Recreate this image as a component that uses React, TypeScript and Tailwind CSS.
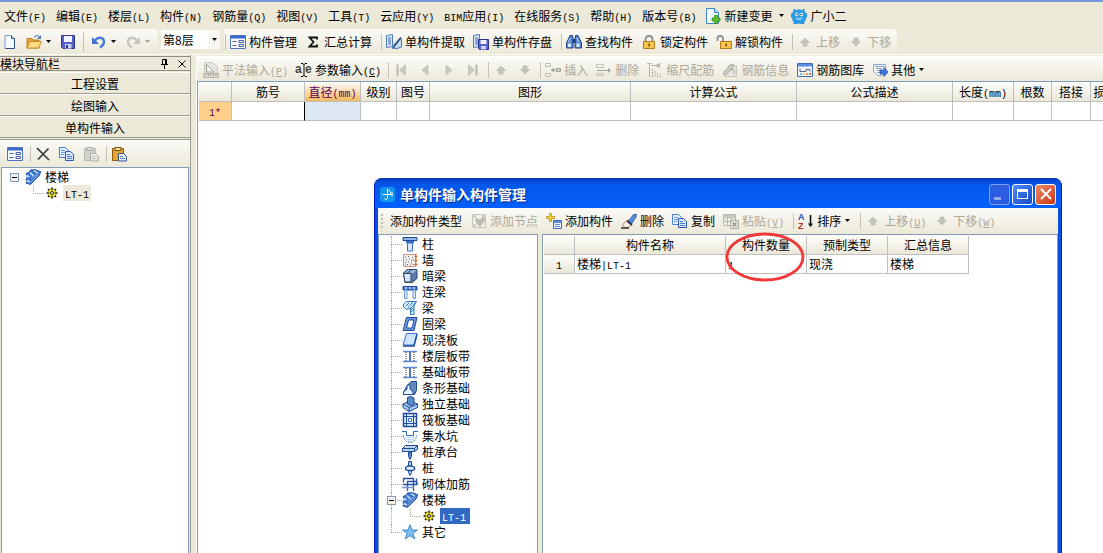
import React, { useState } from 'react';
import clsx from 'clsx';

const GREY = '#b9b7a8';
const NAVY = '#1d4b96';
const BLUE = '#3a6fd0';

// Latin runs use a half-width face so they sit on the same grid as the Chinese text
const Txt: React.FC<{ children: string; underline?: boolean }> = ({ children, underline }) => (
  <span className="whitespace-nowrap">
    {children.split(/([\x21-\x7e]+)/).map((part, i) => {
      if (i % 2 === 0) return part;
      const key = underline ? part.match(/^\((\w)\)$/) : null;
      return (
        <span key={i} className="font-['Liberation_Mono',monospace] text-[10px] leading-none">
          {key ? (
            <>
              (<u>{key[1]}</u>)
            </>
          ) : (
            part
          )}
        </span>
      );
    })}
  </span>
);

const Svg: React.FC<{ children: React.ReactNode; className?: string }> = ({ children, className }) => (
  <svg viewBox="0 0 16 16" className={clsx('w-4 h-4 shrink-0', className)} fill="none" aria-hidden="true">
    {children}
  </svg>
);

const Caret: React.FC<{ muted?: boolean }> = ({ muted }) => (
  <svg viewBox="0 0 7 4" className="w-[7px] h-1 shrink-0" aria-hidden="true">
    <path d="M1 0h5L3.5 3z" fill={muted ? '#a8a69a' : '#000'} />
  </svg>
);

/* ---------- toolbar icons ---------- */

const NewFile = () => (
  <Svg>
    <path d="M3 1.500h6.500l3 3v10H3z" fill="#f4f9ff" stroke="#7f9bc4" />
    <path d="M12.500 5v9.500H3.500" stroke="#30507f" />
    <path d="M9.500 1.500v3h3" fill="#c4d8f4" stroke="#30507f" />
  </Svg>
);

const OpenFolder = () => (
  <Svg>
    <path d="M1 14V4.500h5l1 1.500h6v8z" fill="#e7a93a" stroke="#b97f1c" />
    <path d="M1 14l3-6.500h11.500L12.500 14z" fill="#ffdb83" stroke="#c8902c" />
    <path d="M8 3.500C9.500 1 12 1 13.500 3" stroke="#6b8fc4" strokeWidth="1.300" />
    <path d="M15 1v4h-4z" fill="#4d78b8" />
  </Svg>
);

const Save = () => (
  <Svg>
    <path d="M1.500 1.500h13v13H3l-1.500-1.500z" fill="#5560c8" stroke="#2c348c" />
    <path d="M4 2h8v6H4z" fill="#f2f5ff" />
    <path d="M5 10h6.500v4.500H5z" fill="#cfd4ee" />
    <path d="M6 11h2v3H6z" fill="#2c348c" />
  </Svg>
);

const Undo: React.FC<{ muted?: boolean; flip?: boolean }> = ({ muted, flip }) => (
  <Svg className={flip ? '-scale-x-100' : ''}>
    <path d="M4 6.500C7 2.500 13 3 13 8c0 2.500-1.500 4-4 5.500" stroke={muted ? '#c8c7be' : '#4479d6'} strokeWidth="2.400" />
    <path d="M1 3v7h7z" fill={muted ? '#c8c7be' : '#3a6fcc'} />
  </Svg>
);

const Form = () => (
  <Svg>
    <path d="M.5 1.500h15v13H.5z" fill="#f5f8ff" stroke="#4b73c0" />
    <path d="M1 2h14v2.500H1z" fill="#3a68c8" />
    <path d="M2.500 7.500h4M2.500 11.500h4M9 6.500h4.500v2H9zM9 10.500h4.500v2H9z" stroke="#4763a0" />
  </Svg>
);

const Sigma = () => (
  <Svg>
    <path d="M12 5.500V3.500H4.500L8.500 8l-4 4.500H12v-2" stroke="#111" strokeWidth="1.800" />
  </Svg>
);

const Server = () => (
  <>
    <path d="M.5 1.500l6-1v12l-6 1z" fill="#dceafb" stroke="#4f78b8" />
    <path d="M2 4h3M2 6h3M2 8h3M2 10h3" stroke="#3b69b4" />
  </>
);

const Extract = () => (
  <Svg>
    <Server />
    <path d="M7 14l1.500-4 6-6 1 1v8L11 14.500z" fill="#c9dff7" stroke="#3f72b4" />
    <path d="M6.500 14.500l8.500-11" stroke="#234f8c" strokeWidth="1.500" />
  </Svg>
);

const StoreDisk = () => (
  <Svg>
    <Server />
    <path d="M5.500 5.500h10v10h-9l-1-1z" fill="#5560c8" stroke="#2c348c" />
    <path d="M7.500 6h6v4h-6z" fill="#f2f5ff" />
    <path d="M8 12h5v3.500H8z" fill="#cfd4ee" />
  </Svg>
);

const Binoculars = () => (
  <Svg>
    <path d="M4 1.500h2.500l.5 3V14H.5V9zM9.500 1.500H12L15.500 9v5H9V4.500z" fill="#5f8ad0" stroke="#1f3f80" />
    <path d="M6.500 5h3v4h-3z" fill="#1f3f80" />
    <path d="M2 9.500h3V13H2zM10.500 9.500h3V13h-3z" fill="#dce9fb" />
    <path d="M4 4l-1.500 4M11 4l1.500 4" stroke="#b9d0f2" />
  </Svg>
);

const Padlock: React.FC<{ open?: boolean }> = ({ open }) => (
  <Svg>
    <path d={open ? 'M1.500 7V4.500C1.500 1 7 1 7 4.500V7' : 'M4.500 8V5c0-4 7-4 7 0v3'} stroke="#8c8c8c" strokeWidth="1.800" />
    <path d={open ? 'M4.500 7.500h11v7h-11z' : 'M2.500 7.500h11v7h-11z'} fill="#f9c54c" stroke="#b07a1a" />
    <path d={open ? 'M9.500 9.500h1.500v3H9.500z' : 'M7.300 9.500h1.500v3H7.300z'} fill="#6b4a10" />
  </Svg>
);

const Arrow: React.FC<{ down?: boolean }> = ({ down }) => (
  <Svg className={down ? 'rotate-180' : ''}>
    <path d="M8 4l4.500 4.500H10V12H6V8.500H3.500z" fill="#c5c4bc" stroke="#b3b2aa" strokeWidth=".6" />
  </Svg>
);

const Nav: React.FC<{ back?: boolean; end?: boolean }> = ({ back, end }) => (
  <Svg className={back ? '-scale-x-100' : ''}>
    <path d={end ? 'M3.500 2.500v11l6-5.500z' : 'M5 3v10l6-5z'} fill="#c9c8c0" stroke="#b5b4ac" strokeWidth=".5" />
    {end && <path d="M11.500 2.500v11" stroke="#b9b8b0" strokeWidth="2" />}
  </Svg>
);

const Ruler = () => (
  <Svg>
    <path d="M1.500.5h8l5 4v7h-13z" fill="#e5e4de" stroke="#cac9c0" />
    <path d="M3.500 2.500v7.500h7.500z" fill="#f6f5f0" stroke="#a3a299" />
    <path d="M.5 11.500h15v4H.5z" fill="#dcdbd3" stroke="#b3b2a9" />
    <path d="M3 12v2M5.500 12v2M8 12v2M10.500 12v2M13 12v2" stroke="#9d9c94" />
  </Svg>
);

const TextCursor = () => (
  <Svg className="overflow-visible">
    <text x="-1" y="11" fontSize="12" fontWeight="bold" fill="#444" fontFamily="Liberation Sans, sans-serif">a</text>
    <text x="9" y="11" fontSize="12" fontWeight="bold" fill="#444" fontFamily="Liberation Sans, sans-serif">e</text>
    <path d="M5 1.500h2l1 1 1-1h2M8 2v12M5 14.500h2l1-1 1 1h2" stroke="#000" />
  </Svg>
);

const InsertRow: React.FC<{ remove?: boolean }> = ({ remove }) => (
  <Svg>
    <path d={remove ? 'M.5 2.500h7v3h-7zM.5 11.500h7v2h-7z' : 'M.5 1.500h5v3h-5zM.5 11.500h5v3h-5z'} stroke="#c0bfb6" />
    <path d={remove ? 'M1 8.500h13' : 'M6 8h5'} stroke="#a3a299" />
    <path d={remove ? 'M12 6l3 2.500-3 2.500z' : 'M9 5.500L6 8l3 2.500z'} fill="#a3a299" />
    {!remove && <path d="M11.500 6.500h4v3h-4z" fill="#d4d3cb" stroke="#a3a299" />}
  </Svg>
);

const ScaleBar = () => (
  <Svg>
    <path d="M2.500 1v14M4 3.500h9" stroke={GREY} />
    <path d="M12.500 1v5M5.500 7v8M8 9v6M10.500 11v4M13 13v2" stroke="#aaa99f" strokeDasharray="2 1" />
    <path d="M0 1.500h5M10 2l3 1.500L10 5z" stroke={GREY} />
  </Svg>
);

const RebarInfo = () => (
  <Svg>
    <path d="M6.500 3.500h8v11h-12V9" fill="#e6e5df" stroke="#c5c4bb" />
    <path d="M1 12l7-9 3-1 1 2-8 9z" fill="#cccbc3" stroke="#b0afa6" />
    <path d="M8 8c3-2 5 0 4 4" stroke="#a3a299" />
  </Svg>
);

const Gallery = () => (
  <Svg>
    <path d="M.5 1.500h15v13H.5z" fill="#f0f4fb" stroke="#3f6cb4" />
    <path d="M1 2h14v2.500H1z" fill="#5b8ee0" />
    <path d="M3 6.500v3h6v-2h4v2" stroke="#596880" />
    <path d="M3 12h2" stroke="#48a0e0" strokeWidth="1.500" />
    <path d="M6 12h2" stroke="#f0c040" strokeWidth="1.500" />
    <path d="M9 12h2" stroke="#e08030" strokeWidth="1.500" />
    <path d="M12 12h2" stroke="#e04830" strokeWidth="1.500" />
  </Svg>
);

const MoreOps = () => (
  <Svg>
    <path d="M1.500 2.500h12v8l-3 3h-5l-4-4z" fill="#f2f6fc" stroke="#8aa6d0" />
    <path d="M3 4.500h9M4 6.500h6M5 8.500h3M5 10.500h3" stroke="#8f9fbc" />
    <path d="M8 8h4V5.500L16 10l-4 4.500V12H8z" fill="#3f78dc" stroke="#1d4b96" strokeWidth=".7" />
  </Svg>
);

const FileAdd = () => (
  <Svg>
    <path d="M1.500.5h8l4 4v11h-12z" fill="#eef7ff" stroke="#3c86cc" />
    <path d="M9.500.5v4h4" fill="#b9dcf8" stroke="#3c86cc" />
    <path d="M9.500 7.500h3V10H15v3h-2.500v2.500h-3V13H7v-3h2.500z" fill="#5cc02c" stroke="#2f8010" strokeWidth=".7" />
  </Svg>
);

const Mascot = () => (
  <Svg>
    <path d="M3 1l2 1.500c2-1 4-1 6 0L13 1l.8 3.500L16 6v3l-1.500 1c0 2-.5 3-1.500 4v2h-3l-2-1-2 1H3v-2c-1-1-1.500-2-1.500-4L0 9V6l2.200-1.500z" fill="#2a9fe8" stroke="#1777c0" strokeWidth=".5" />
    <circle cx="5.700" cy="6.500" r="1.700" fill="#fff" />
    <circle cx="10.300" cy="6.500" r="1.700" fill="#fff" />
    <circle cx="6" cy="6.500" r=".8" fill="#123" />
    <circle cx="10" cy="6.500" r=".8" fill="#123" />
    <path d="M5 10c2 1.500 4 1.500 6 0" stroke="#fff" />
  </Svg>
);

const Cross = () => (
  <Svg>
    <path d="M2 2l12 12M13.500 2.500L3 13.500" stroke="#3a3a3a" strokeWidth="1.700" />
  </Svg>
);

const Copy = () => (
  <Svg>
    <path d="M.5 1.500h6l3 3v7h-9z" fill="#e4efff" stroke="#4a80d0" />
    <path d="M2 4.500h4M2 6.500h4M2 8.500h3" stroke="#6c9be0" />
    <path d="M6.500 5.500h5l3 3v6h-8z" fill="#d6e6ff" stroke="#2c5cb0" />
    <path d="M8 8.500h3M8 10.500h5M8 12.500h5" stroke="#5080d0" />
  </Svg>
);

const Paste: React.FC<{ muted?: boolean }> = ({ muted }) => (
  <Svg>
    <path d="M1.500 2.500h11v12h-11z" fill={muted ? '#d2d1ca' : '#e8a52c'} stroke={muted ? '#bbbab2' : '#8c5a10'} />
    <path d="M4 1.500h6v3H4z" fill={muted ? '#dddcd6' : '#f7e08c'} stroke={muted ? '#aeada5' : '#6a5020'} />
    <path d="M7.500 7.500h5l3 3v4.500h-8z" fill={muted ? '#eceae4' : '#e4efff'} stroke={muted ? '#aeada5' : '#33508c'} />
    <path d="M9 10.500h3M9 12.500h5" stroke={muted ? '#bbbab2' : '#6080b8'} />
  </Svg>
);

const NodeAdd = () => (
  <Svg>
    <path d="M1.500 1.500h13v13h-13z" fill="#f3f2ec" stroke="#c3c2b9" />
    <path d="M1 1h4v4H1zM11 1h4v4h-4zM1 11h4v4H1z" fill="#cfcec5" />
    <path d="M4 6l1 4 4 4 6-7-1.500-2.500L11 4 9 6.500 6.500 5z" fill="#bdbcb3" />
  </Svg>
);

const PartAdd = () => (
  <Svg>
    <path d="M3.500.5h2v3h3v2h-3v3h-2v-3h-3v-2h3z" fill="#ffd94a" stroke="#b48a14" strokeWidth=".8" />
    <path d="M7.500 7.500h8v8h-8z" fill="#e8f0ff" stroke="#3f6cb4" />
    <path d="M8 8h7v2H8z" fill="#5b8ee0" />
    <path d="M9 11.500h5M9 13.500h5" stroke="#6f8fc8" />
  </Svg>
);

const Eraser = () => (
  <Svg>
    <path d="M7 8.500L12.500 1.500h3L15 4l-4.500 7z" fill="#5a8ce0" stroke="#234f9c" strokeWidth=".8" />
    <path d="M1.500 11.500l4-3.500 4.500 4-2.500 2.500H3.500z" fill="#faf0e8" stroke="#a8806c" />
    <path d="M0 15h8" stroke="#333" strokeWidth="1.300" />
    <path d="M6 7.500l5 4.500" stroke="#26304c" strokeWidth="1.700" />
  </Svg>
);

const PasteGrid = () => (
  <Svg>
    <path d="M.5 1.500h12v11H.5zM.5 5h12M.5 8.500h12M4.500 2v10M8.500 2v10" stroke="#b9b8b0" />
    <path d="M1 2h11v2.500H1z" fill="#c9c8c0" />
    <path d="M7.500 7.500h8v8h-8z" fill="#e6e5df" stroke="#aeada5" />
    <path d="M9.500 9.500l4 4M13.500 9.500l-4 4" stroke="#96958d" strokeWidth="1.300" />
  </Svg>
);

const SortAZ = () => (
  <Svg>
    <text x="0" y="7" fontSize="9" fontWeight="bold" fill="#2c50b0" fontFamily="Liberation Sans, sans-serif">A</text>
    <text x="0" y="15.500" fontSize="9" fontWeight="bold" fill="#b03030" fontFamily="Liberation Sans, sans-serif">Z</text>
    <path d="M12.500 2v11" stroke="#000" strokeWidth="1.500" />
    <path d="M10 10.500h5l-2.500 3.500z" fill="#000" />
  </Svg>
);

/* ---------- tree icons ---------- */

const Stair = () => (
  <Svg>
    <path d="M1 4.500l3.500-1.500L5.500.8h3L10 .5l6 2.200-2 4.300-8.500 8.500L.8 14l1.500-2L.8 11l1.500-3z" fill="#3d74cc" stroke={NAVY} strokeWidth=".8" />
    <path d="M1.500 6.500l3 1.500M5 3.500l3.500 3.500M9 1.500l3.500 2.500M2 11.500l3 1.500" stroke="#d3e4fb" strokeWidth="1.400" />
    <path d="M6 9.500l7.500-5.500M6 13l7-7" stroke="#85aeea" />
  </Svg>
);

const Gear = () => (
  <svg viewBox="0 0 12 12" className="w-3 h-3 shrink-0" aria-hidden="true">
    <path d="M6 .5v11M.5 6h11M2 2l8 8M10 2l-8 8" stroke="#222" strokeWidth="1.600" />
    <circle cx="6" cy="6" r="4.200" fill="#f6ec1c" stroke="#4c4800" strokeWidth=".6" />
    <circle cx="6" cy="6" r="1.500" fill="#fff" stroke="#222" />
    <path d="M6 2v1.500M6 8.500V10M2 6h1.500M8.500 6H10" stroke="#222" />
  </svg>
);

const treeIcons: Record<string, React.ReactNode> = {
  柱: (
    <>
      <path d="M1 1.500h14v3H1z" fill="#8fb4ee" stroke={NAVY} />
      <path d="M4 5h8v2H4z" fill={BLUE} />
      <path d="M5.500 7h5v8h-5z" fill="#d8e7fc" stroke={BLUE} />
    </>
  ),
  墙: (
    <>
      <path d="M1.500 2.500h12v12h-12z" fill="#efeeec" stroke="#d09878" />
      <path d="M3 5h1M6 4.500h1M10 5.500h1M4 8h1M7 7h1M9 8.500h1M3 10.500h1M6 10h1M5 12.500h1M9 11h1M11 12.500h1M8 13h1M3 13h1M11 8h1" stroke="#666" />
      <path d="M14 1.500v13M12.500 4.500h3M12.500 8.500h3M12.500 12.500h3" stroke="#d4682c" />
    </>
  ),
  暗梁: (
    <>
      <path d="M1.500 5L5 1.500h10v9L10 14.500H3z" fill="#5e7dac" stroke="#2a4470" />
      <path d="M1.500 5.500H9V14H3z" fill="#d9e6f6" stroke="#2a4470" />
      <path d="M3.500 4.500L7 2M8 4.500L12 2M9.500 5l5-3" stroke="#c4d5ee" />
    </>
  ),
  连梁: (
    <>
      <path d="M1 2.500h14v3.500H1z" fill="#4a7cd6" stroke={NAVY} />
      <path d="M2.500 6h2.500v8.500H2.500zM11 6h2.500v8.500H11z" fill="#dce9fc" stroke="#6f96d8" />
      <path d="M3 4h2M7 4h2M11 4h2" stroke="#fff" />
    </>
  ),
  梁: (
    <>
      <path d="M1.500 4l3-2.500h10L12 6v8.500H8.500V8L5 9.500 1.500 7z" fill="#dcefff" stroke="#2a78c0" />
      <path d="M4 6l3-3M6 7.500L11 2M9 8l4-5M9 12l3-3M9 10l3-3" stroke="#2a78c0" />
    </>
  ),
  圈梁: (
    <>
      <path d="M4.500 1.500h10.500l-3 13H1z" fill="#6f97dc" stroke={NAVY} />
      <path d="M6.500 4H12l-2 8H4.500z" fill="#fff" stroke={NAVY} />
    </>
  ),
  现浇板: (
    <>
      <path d="M4.500 1.500H15l-3 11.500H1z" fill="#cfe3fb" stroke={BLUE} />
      <path d="M1 14h11l3-11.500" stroke={NAVY} strokeWidth="1.500" />
    </>
  ),
  楼层板带: (
    <>
      <path d="M1 3.500h14M1 13.500h14" stroke="#5b8ad8" strokeWidth="1.500" />
      <path d="M8 4v9" stroke={NAVY} strokeWidth="1.500" />
      <path d="M4 4v9M12 4v9" stroke="#333" strokeDasharray="1 1" />
    </>
  ),
  条形基础: (
    <>
      <path d="M5 6l4-4.500h5.500v9l-2 4H1.500V12z" fill="#6289b8" stroke={NAVY} />
      <path d="M1.500 14.500V12L5 9V5h3v4l3 3v2.500z" fill="#eaf3ff" stroke={NAVY} />
    </>
  ),
  独立基础: (
    <>
      <path d="M1 8l7-3.500L15.500 8v3.500L7 15.500l-6-4z" fill="#a9c9f0" stroke={NAVY} />
      <path d="M1 8l6 3.500L15.500 8M7 11.500v4" stroke={NAVY} />
      <path d="M5.500 1.500L9 .5l3 1.500v6L8.500 9.500l-3-1.500z" fill="#5c8cc8" stroke={NAVY} />
    </>
  ),
  筏板基础: (
    <>
      <path d="M1.500 1.500h13v13h-13z" fill="#dbe9fb" stroke={NAVY} strokeWidth="1.500" />
      <path d="M4.500 1v14M11.500 1v14M1 4.500h14M1 11.500h14" stroke={NAVY} />
      <path d="M6.500 6.500h3v3h-3z" fill="#fff" stroke={BLUE} />
    </>
  ),
  集水坑: (
    <>
      <path d="M0 3.500h4.500v4h7v-4H16" stroke="#2f6cb8" />
      <path d="M1 7c1 5.500 4 7.500 7 7.500s6-2 7-7.500" stroke="#4f88d0" strokeDasharray="2 1" />
      <path d="M3.500 9.500h9M4.500 11.500h7M6 13h4" stroke="#78a7e4" strokeDasharray="1 1" />
    </>
  ),
  桩承台: (
    <>
      <path d="M.5 4.500l3-3h12v4l-3 2H.5z" fill="#b9d3f4" stroke={NAVY} />
      <path d="M.5 4.500h12v3M12.500 4.500l3-3" stroke={NAVY} />
      <path d="M6.500 8h3v4.500L8 15.500l-1.500-3z" fill="#5c8cc8" stroke={NAVY} />
    </>
  ),
  桩: (
    <>
      <path d="M6.500 1.500h3v5h-3zM6.500 9h3v3.500L8 15.500l-1.500-3z" fill="#a9c9f0" stroke={NAVY} />
      <path d="M3.500 7.500L6 6h4l2.500 1.500v2l-2.500 1H6l-2.500-1z" fill="#e4f0ff" stroke={NAVY} strokeWidth="1.300" />
    </>
  ),
  砌体加筋: (
    <>
      <path d="M1.500 6.500V2.500h10v6h3v-6M1 8.500h14v-3M5.500 15V5.500h9M11.500 9v6" stroke="#2a52a0" strokeWidth="1.300" />
      <path d="M0 11.500h12" stroke="#6f97dc" strokeWidth="1.500" />
    </>
  ),
  其它: <path d="M8 .8l2 5.200h5.500L11 9.300l1.800 5.700L8 11.700 3.200 15 5 9.300.5 6H6z" fill="#7cc0f2" stroke="#2c74c0" strokeWidth=".8" />,
};
treeIcons['基础板带'] = treeIcons['楼层板带'];

const treeNames = [
  '柱', '墙', '暗梁', '连梁', '梁', '圈梁', '现浇板', '楼层板带', '基础板带',
  '条形基础', '独立基础', '筏板基础', '集水坑', '桩承台', '桩', '砌体加筋',
];

/* ---------- shared pieces ---------- */

interface ToolProps {
  icon?: React.ReactNode;
  label?: string;
  title?: string;
  disabled?: boolean;
  caret?: boolean;
}

const Tool: React.FC<ToolProps> = ({ icon, label, title, disabled, caret }) => (
  <button
    type="button"
    disabled={disabled}
    aria-label={label ?? title}
    className="flex shrink-0 items-center gap-[3px] h-full px-1 text-black disabled:text-[#aca899]"
  >
    {icon}
    {label && <Txt underline>{label}</Txt>}
    {caret && <Caret muted={disabled} />}
  </button>
);

const Sep: React.FC<{ tight?: boolean }> = ({ tight }) => (
  <span className={clsx('w-px h-4 shrink-0 bg-[#c5c2b4]', tight ? 'ml-[3px]' : 'ml-[5px]')} />
);

const bar = 'flex items-center bg-linear-to-b from-[#fbfaf7] to-[#ece9d8]';
const headCell = 'bg-linear-to-b from-[#fdfdfb] to-[#ebe8d9] border-r border-b border-[#bfbfbf] p-0 text-center font-normal';
const cell = 'border-r border-b border-[#bfbfbf] p-0';

const Expander = () => (
  <button type="button" aria-label="折叠" className="flex items-center justify-center w-[9px] h-[9px] shrink-0 border border-[#7f9db9] bg-[#f4f2ea]">
    <span className="w-[5px] h-px bg-black" />
  </button>
);

const menus = [
  '文件(F)', '编辑(E)', '楼层(L)', '构件(N)', '钢筋量(Q)', '视图(V)', '工具(T)',
  '云应用(Y)', 'BIM应用(I)', '在线服务(S)', '帮助(H)', '版本号(B)',
];

const gridCols = [
  { name: '筋号', col: 'w-[73px]' },
  { name: '直径(mm)', col: 'w-[56px]' },
  { name: '级别', col: 'w-[36px]' },
  { name: '图号', col: 'w-[33px]' },
  { name: '图形', col: 'w-[201px]' },
  { name: '计算公式', col: 'w-[166px]' },
  { name: '公式描述', col: 'w-[156px]' },
  { name: '长度(mm)', col: 'w-[61px]' },
  { name: '根数', col: 'w-[38px]' },
  { name: '搭接', col: 'w-[39px]' },
  { name: '损耗', col: 'w-[30px]' },
];

/* ---------- panels ---------- */

const MenuBar = () => (
  <nav className="flex items-center h-[27px] shrink-0 pl-1">
    <div className="flex gap-[10px]">
      {menus.map(m => (
        <button key={m} type="button"><Txt>{m}</Txt></button>
      ))}
    </div>
    <button type="button" className="flex items-center gap-[3px] ml-[9px]">
      <FileAdd />
      <Txt>新建变更</Txt>
      <span className="ml-[3px]"><Caret /></span>
    </button>
    <button type="button" className="flex items-center gap-[3px] ml-[6px]">
      <Mascot />
      <Txt>广小二</Txt>
    </button>
  </nav>
);

const MainToolbar = () => {
  const [floor, setFloor] = useState('第8层');
  return (
    <div className="flex items-center h-[25px] shrink-0">
      <div className={clsx(bar, 'h-full w-[158px] rounded-r-sm')}>
        <div className="flex items-center h-full -ml-1 pl-[2px]">
          <Tool icon={<NewFile />} title="新建" />
          <Tool icon={<OpenFolder />} title="打开" caret />
          <Tool icon={<Save />} title="保存" />
          <span className="w-px h-5 ml-[3px] mr-[3px] bg-[#c5c2b4]" />
          <Tool icon={<Undo />} title="撤销" caret />
          <Tool icon={<Undo muted flip />} title="重做" caret disabled />
        </div>
      </div>
      <div className="relative ml-[3px] mb-1">
        <select
          aria-label="楼层"
          value={floor}
          onChange={e => setFloor(e.target.value)}
          className="block appearance-none w-[59px] h-[19px] pl-[2px] bg-white text-xs leading-4 outline-none"
        >
          <option>第8层</option>
          <option>第7层</option>
        </select>
        <span className="absolute right-0 inset-y-0 flex items-center justify-center w-3 bg-[#f8f7f1] pointer-events-none">
          <Caret />
        </span>
      </div>
      <div className={clsx(bar, 'h-full ml-1 pl-px pr-[2px] rounded-r-sm')}>
        <span className="w-px h-4 bg-[#c5c2b4]" />
        <Tool icon={<Form />} label="构件管理" />
        <Tool icon={<Sigma />} label="汇总计算" />
        <Sep />
        <Tool icon={<Extract />} label="单构件提取" />
        <Tool icon={<StoreDisk />} label="单构件存盘" />
        <Sep />
        <Tool icon={<Binoculars />} label="查找构件" />
        <Tool icon={<Padlock />} label="锁定构件" />
        <Tool icon={<Padlock open />} label="解锁构件" />
        <Sep />
        <Tool icon={<Arrow />} label="上移" disabled />
        <Tool icon={<Arrow down />} label="下移" disabled />
      </div>
    </div>
  );
};

const NavPanel = () => (
  <aside className="flex flex-col w-[191px] shrink-0 border-r border-[#9d9c92]">
    <header className="flex items-center h-[15px] mt-px border-y border-[#8f8e86] pr-1">
      <span className="flex-1"><Txt>模块导航栏</Txt></span>
      <button type="button" aria-label="固定">
        <svg viewBox="0 0 9 10" className="w-[9px] h-[10px] mr-[9px]" fill="none">
          <path d="M2.500 5V.5h4V5M5.500 1v4M1 5.500h7M4.500 6v4" stroke="#000" />
        </svg>
      </button>
      <button type="button" aria-label="关闭">
        <svg viewBox="0 0 8 8" className="w-2 h-2" fill="none">
          <path d="M.5.5l7 7M7.500.5l-7 7" stroke="#000" />
        </svg>
      </button>
    </header>
    <div className="flex flex-col mt-px">
      {['工程设置', '绘图输入', '单构件输入'].map(t => (
        <button key={t} type="button" className="h-[22px] pt-px border-t border-t-white border-b border-b-[#9d9c92]">
          <Txt>{t}</Txt>
        </button>
      ))}
    </div>
    <div className={clsx(bar, 'h-7 mt-px border-t border-[#9d9c92] pl-[3px]')}>
      <Tool icon={<Form />} title="构件" />
      <Sep tight />
      <Tool icon={<Cross />} title="删除" />
      <Tool icon={<Copy />} title="复制" />
      <Tool icon={<Paste muted />} title="粘贴" disabled />
      <Sep tight />
      <Tool icon={<Paste />} title="粘贴到" />
    </div>
    <ul className="flex-1 mx-px pt-px border border-b-0 border-[#7f9db9] bg-white">
      <li>
        <div className="flex items-center h-4 pl-2">
          <Expander />
          <span className="flex items-center gap-1 pl-[6px]"><Stair /><Txt>楼梯</Txt></span>
        </div>
        <div className="flex items-center h-4 pl-[31px]">
          <span className="w-[11px] h-[9px] mb-2 border-l border-b border-dotted border-[#aca899]" />
          <span className="ml-[2px] mr-[5px] flex"><Gear /></span>
          <button type="button" className="h-4 px-[2px] bg-[#ece9d8] leading-4"><Txt>LT-1</Txt></button>
        </div>
      </li>
    </ul>
  </aside>
);

const RebarPanel = () => (
  <main className="flex flex-col flex-1 min-w-0 ml-[5px] border-l border-white">
    <div className={clsx(bar, 'h-[25px] mt-px border-t-2 border-white pl-[2px] overflow-hidden')}>
      <Tool icon={<Ruler />} label="平法输入(P)" disabled />
      <Tool icon={<TextCursor />} label="参数输入(C)" />
      <Sep tight />
      <Tool icon={<Nav back end />} title="第一条" disabled />
      <Tool icon={<Nav back />} title="上一条" disabled />
      <Tool icon={<Nav />} title="下一条" disabled />
      <Tool icon={<Nav end />} title="最后一条" disabled />
      <Sep tight />
      <Tool icon={<Arrow />} title="上移" disabled />
      <Tool icon={<Arrow down />} title="下移" disabled />
      <Sep tight />
      <Tool icon={<InsertRow />} label="插入" disabled />
      <Tool icon={<InsertRow remove />} label="删除" disabled />
      <Tool icon={<ScaleBar />} label="缩尺配筋" disabled />
      <Tool icon={<RebarInfo />} label="钢筋信息" disabled />
      <Tool icon={<Gallery />} label="钢筋图库" />
      <Tool icon={<MoreOps />} label="其他" caret />
    </div>
    <div className="flex-1 border-t border-l border-[#7f9db9] bg-white overflow-hidden pl-px">
      <table className="table-fixed w-0 border-separate border-spacing-0">
        <colgroup>
          <col className="w-[33px]" />
          {gridCols.map(c => <col key={c.name} className={c.col} />)}
        </colgroup>
        <thead>
          <tr className="h-5">
            <th className={headCell} />
            {gridCols.map((c, i) => (
              <th
                key={c.name}
                className={clsx(headCell, i === 1 && 'from-[#fbd08c] to-[#f3b95c] text-[#5c0050]')}
              >
                <Txt>{c.name}</Txt>
              </th>
            ))}
          </tr>
        </thead>
        <tbody>
          <tr className="h-[19px]">
            <td className={clsx(cell, 'bg-[#ffd08a] text-center text-[#5c0050]')}><Txt>1*</Txt></td>
            {gridCols.map((c, i) => (
              <td key={c.name} className={clsx(cell, i === 0 && 'border-r-black', i === 1 && 'bg-[#dfe9f5]')} />
            ))}
          </tr>
        </tbody>
      </table>
    </div>
  </main>
);

const TreeRow: React.FC<{ name: string; last?: boolean; open?: boolean; icon: React.ReactNode }> = ({ name, last, open, icon }) => (
  <div className="flex items-center h-4 pl-2">
    <span className="relative flex items-center w-[9px] h-4 mr-[6px]">
      <span className={clsx('absolute left-1 top-0 border-l border-dotted border-[#aca899]', last ? 'h-2' : 'h-4')} />
      <span className="absolute left-1 top-2 w-[11px] border-t border-dotted border-[#aca899]" />
      {open && <span className="relative flex"><Expander /></span>}
    </span>
    <span className="flex items-center gap-1">
      {icon}
      <Txt>{name}</Txt>
    </span>
  </div>
);

const ComponentTree = () => (
  <ul className="w-[160px] shrink-0 pt-px border border-b-0 border-[#7f9db9] bg-white">
    {treeNames.map(n => (
      <li key={n}><TreeRow name={n} icon={<Svg>{treeIcons[n]}</Svg>} /></li>
    ))}
    <li>
      <TreeRow name="楼梯" open icon={<Stair />} />
      <div className="flex items-center h-4 pl-3">
        <span className="w-px h-4 border-l border-dotted border-[#aca899]" />
        <span className="w-[11px] h-[9px] mb-2 ml-[18px] border-l border-b border-dotted border-[#aca899]" />
        <span className="ml-[2px] mr-[5px] flex"><Gear /></span>
        <button type="button" className="h-4 pl-[2px] pr-1 bg-[#316ac5] text-white leading-4"><Txt>LT-1</Txt></button>
      </div>
    </li>
    <li><TreeRow name="其它" last icon={<Svg>{treeIcons['其它']}</Svg>} /></li>
  </ul>
);

const ComponentTable = () => (
  <div className="flex-1 border border-b-0 border-[#7f9db9] bg-white p-px">
    <table className="table-fixed w-0 border-separate border-spacing-0">
      <colgroup>
        <col className="w-[31px]" />
        <col className="w-[151px]" />
        <col className="w-[81px]" />
        <col className="w-[81px]" />
        <col className="w-[81px]" />
      </colgroup>
      <thead>
        <tr className="h-[19px]">
          <th className={headCell} />
          <th className={headCell}><Txt>构件名称</Txt></th>
          <th className={clsx(headCell, 'relative')}>
            <Txt>构件数量</Txt>
            {/* red ring round the quantity column */}
            <svg viewBox="0 0 82 50" className="absolute -left-[2px] -top-1 w-[82px] h-[50px] z-10 pointer-events-none" fill="none">
              <ellipse cx="41" cy="25" rx="38" ry="23" stroke="#f03a3a" strokeWidth="2.800" />
            </svg>
          </th>
          <th className={headCell}><Txt>预制类型</Txt></th>
          <th className={headCell}><Txt>汇总信息</Txt></th>
        </tr>
      </thead>
      <tbody>
        <tr className="h-[19px]">
          <td className={headCell}><Txt>1</Txt></td>
          <td className={clsx(cell, 'pl-[2px]')}><Txt>楼梯|LT-1</Txt></td>
          <td className={clsx(cell, 'pl-[2px]')}><Txt>1</Txt></td>
          <td className={clsx(cell, 'pl-[2px]')}><Txt>现浇</Txt></td>
          <td className={clsx(cell, 'pl-[2px]')}><Txt>楼梯</Txt></td>
        </tr>
      </tbody>
    </table>
  </div>
);

const winBtn = 'flex items-center justify-center w-[21px] h-[21px] rounded-[3px] border';

const ManagerDialog = () => (
  <section
    role="dialog"
    aria-label="单构件输入构件管理"
    className="absolute left-[374px] right-[41px] top-[176px] bottom-0 flex flex-col rounded-t-lg overflow-hidden border-x border-[#0018c0] bg-[#0a50e0] px-[3px]"
  >
    <header className="flex items-center h-[30px] shrink-0 -mx-[3px] px-[5px] pt-[2px] bg-linear-to-b from-[#0838b8] via-[#0358ea] via-20% to-[#0460fb]">
      <svg viewBox="0 0 15 15" className="w-[15px] h-[15px] shrink-0" fill="none">
        <rect width="15" height="15" rx="3" fill="#1296ec" />
        <path d="M7.500 2v9c0 2-3 2-3 0M2.500 7.500h10M7.500 3c3 0 3 2 3 4M12 5v4.500" stroke="#fff" />
      </svg>
      <h2 className="flex-1 ml-[5px] text-sm leading-5 font-bold text-white [text-shadow:1px_1px_#0a1e78]">单构件输入构件管理</h2>
      <div className="flex gap-[2px]">
        <button type="button" aria-label="最小化" disabled className={clsx(winBtn, 'border-[#7f9ff0] bg-[#2c5ce0]')}>
          <span className="w-[7px] h-[3px] mt-[9px] mr-1 bg-[#8fa9ee]" />
        </button>
        <button type="button" aria-label="最大化" className={clsx(winBtn, 'border-white bg-linear-to-br from-[#4f8af8] to-[#1848c8]')}>
          <span className="w-[11px] h-[10px] border border-t-[3px] border-white" />
        </button>
        <button type="button" aria-label="关闭" className={clsx(winBtn, 'border-white bg-linear-to-br from-[#f08a66] to-[#c8320c]')}>
          <svg viewBox="0 0 12 12" className="w-3 h-3"><path d="M1 1l10 10M11 1L1 11" stroke="#fff" strokeWidth="2" /></svg>
        </button>
      </div>
    </header>
    <div className="flex flex-col flex-1 bg-[#ece9d8]">
      <div className={clsx(bar, 'h-[26px] shrink-0 overflow-hidden pl-[3px]')}>
        <span className="h-[14px] mr-[3px] border-l-2 border-dotted border-[#c1beae]" />
        <span className="mr-px h-full"><Tool label="添加构件类型" /></span>
        <Tool icon={<NodeAdd />} label="添加节点" disabled />
        <Tool icon={<PartAdd />} label="添加构件" />
        <Tool icon={<Eraser />} label="删除" />
        <Tool icon={<Copy />} label="复制" />
        <Tool icon={<PasteGrid />} label="粘贴(V)" disabled />
        <Sep />
        <Tool icon={<SortAZ />} label="排序" caret />
        <Sep />
        <Tool icon={<Arrow />} label="上移(U)" disabled />
        <Tool icon={<Arrow down />} label="下移(W)" disabled />
      </div>
      <div className="flex flex-1 gap-1">
        <ComponentTree />
        <ComponentTable />
      </div>
    </div>
  </section>
);

export default function App() {
  return (
    <div className="relative flex flex-col h-screen overflow-hidden border-t-2 border-[#7896e0] bg-[#ece9d8] text-xs leading-4 text-black font-['Noto_Sans_CJK_SC',sans-serif]">
      <MenuBar />
      <MainToolbar />
      <div className="flex flex-1 min-h-0 border-t border-white">
        <NavPanel />
        <RebarPanel />
      </div>
      <ManagerDialog />
    </div>
  );
}
